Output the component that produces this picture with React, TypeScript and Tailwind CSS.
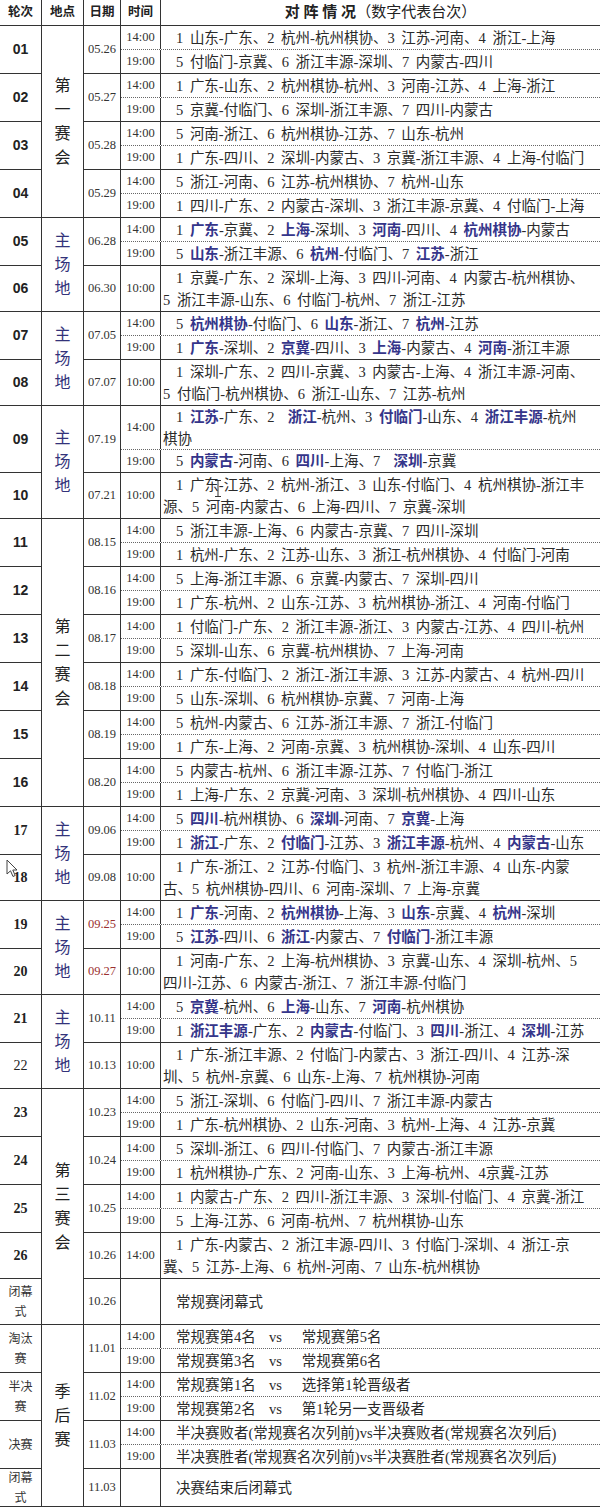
import React from 'react';

type Sub = { t: string; m: string[]; h?: string };
type Round = {
    no: string;
    kind: 'sans' | 'serifB' | 'serif' | 'label';
    date: string;
    red?: boolean;
    h: string;
    subs: Sub[];
};
type Group = { venue: string; blue?: boolean; rounds: Round[] };

const two = (no: string, date: string, a: string, b: string, kind: Round['kind'] = 'sans', red = false): Round => ({
    no,
    kind,
    date,
    red,
    h: 'h-[48px]',
    subs: [
        { t: '14:00', m: [a] },
        { t: '19:00', m: [b] },
    ],
});

const wrap = (no: string, date: string, t: string, l1: string, l2: string, kind: Round['kind'] = 'sans', red = false): Round => ({
    no,
    kind,
    date,
    red,
    h: 'h-[46px]',
    subs: [{ t, m: [l1, l2] }],
});

const groups: Group[] = [
    {
        venue: '第一赛会',
        rounds: [
            two('01', '05.26', '1 山东-广东、2 杭州-杭州棋协、3 江苏-河南、4 浙江-上海', '5 付临门-京冀、6 浙江丰源-深圳、7 内蒙古-四川'),
            two('02', '05.27', '1 广东-山东、2 杭州棋协-杭州、3 河南-江苏、4 上海-浙江', '5 京冀-付临门、6 深圳-浙江丰源、7 四川-内蒙古'),
            two('03', '05.28', '5 河南-浙江、6 杭州棋协-江苏、7 山东-杭州', '1 广东-四川、2 深圳-内蒙古、3 京冀-浙江丰源、4 上海-付临门'),
            two('04', '05.29', '5 浙江-河南、6 江苏-杭州棋协、7 杭州-山东', '1 四川-广东、2 内蒙古-深圳、3 浙江丰源-京冀、4 付临门-上海'),
        ],
    },
    {
        venue: '主场地',
        blue: true,
        rounds: [
            two('05', '06.28', '1 *广东*-京冀、2 *上海*-深圳、3 *河南*-四川、4 *杭州棋协*-内蒙古', '5 *山东*-浙江丰源、6 *杭州*-付临门、7 *江苏*-浙江'),
            wrap('06', '06.30', '10:00', '1 京冀-广东、2 深圳-上海、3 四川-河南、4 内蒙古-杭州棋协、', '5 浙江丰源-山东、6 付临门-杭州、7 浙江-江苏'),
        ],
    },
    {
        venue: '主场地',
        blue: true,
        rounds: [
            two('07', '07.05', '5 *杭州棋协*-付临门、6 *山东*-浙江、7 *杭州*-江苏', '1 *广东*-深圳、2 *京冀*-四川、3 *上海*-内蒙古、4 *河南*-浙江丰源'),
            wrap('08', '07.07', '10:00', '1 深圳-广东、2 四川-京冀、3 内蒙古-上海、4 浙江丰源-河南、', '5 付临门-杭州棋协、6 浙江-山东、7 江苏-杭州'),
        ],
    },
    {
        venue: '主场地',
        blue: true,
        rounds: [
            {
                no: '09',
                kind: 'sans',
                date: '07.19',
                h: 'h-[67px]',
                subs: [
                    { t: '14:00', h: 'h-[44px]', m: ['1 *江苏*-广东、2  *浙江*-杭州、3 *付临门*-山东、4 *浙江丰源*-杭州', '棋协'] },
                    { t: '19:00', m: ['5 *内蒙古*-河南、6 *四川*-上海、7  *深圳*-京冀'] },
                ],
            },
            wrap('10', '07.21', '10:00', '1 广东-江苏、2 杭州-浙江、3 山东-付临门、4 杭州棋协-浙江丰', '源、5 河南-内蒙古、6 上海-四川、7 京冀-深圳'),
        ],
    },
    {
        venue: '第二赛会',
        rounds: [
            two('11', '08.15', '5 浙江丰源-上海、6 内蒙古-京冀、7 四川-深圳', '1 杭州-广东、2 江苏-山东、3 浙江-杭州棋协、4 付临门-河南'),
            two('12', '08.16', '5 上海-浙江丰源、6 京冀-内蒙古、7 深圳-四川', '1 广东-杭州、2 山东-江苏、3 杭州棋协-浙江、4 河南-付临门'),
            two('13', '08.17', '1 付临门-广东、2 浙江丰源-浙江、3 内蒙古-江苏、4 四川-杭州', '5 深圳-山东、6 京冀-杭州棋协、7 上海-河南'),
            two('14', '08.18', '1 广东-付临门、2 浙江-浙江丰源、3 江苏-内蒙古、4 杭州-四川', '5 山东-深圳、6 杭州棋协-京冀、7 河南-上海'),
            two('15', '08.19', '5 杭州-内蒙古、6 江苏-浙江丰源、7 浙江-付临门', '1 广东-上海、2 河南-京冀、3 杭州棋协-深圳、4 山东-四川'),
            two('16', '08.20', '5 内蒙古-杭州、6 浙江丰源-江苏、7 付临门-浙江', '1 上海-广东、2 京冀-河南、3 深圳-杭州棋协、4 四川-山东'),
        ],
    },
    {
        venue: '主场地',
        blue: true,
        rounds: [
            two('17', '09.06', '5 *四川*-杭州棋协、6 *深圳*-河南、7 *京冀*-上海', '1 *浙江*-广东、2 *付临门*-江苏、3 *浙江丰源*-杭州、4 *内蒙古*-山东', 'serifB'),
            wrap('18', '09.08', '10:00', '1 广东-浙江、2 江苏-付临门、3 杭州-浙江丰源、4 山东-内蒙', '古、5 杭州棋协-四川、6 河南-深圳、7 上海-京冀', 'serifB'),
        ],
    },
    {
        venue: '主场地',
        blue: true,
        rounds: [
            two('19', '09.25', '1 *广东*-河南、2 *杭州棋协*-上海、3 *山东*-京冀、4 *杭州*-深圳', '5 *江苏*-四川、6 *浙江*-内蒙古、7 *付临门*-浙江丰源', 'serifB', true),
            wrap('20', '09.27', '10:00', '1 河南-广东、2 上海-杭州棋协、3 京冀-山东、4 深圳-杭州、5', '四川-江苏、6 内蒙古-浙江、7 浙江丰源-付临门', 'serifB', true),
        ],
    },
    {
        venue: '主场地',
        blue: true,
        rounds: [
            two('21', '10.11', '5 *京冀*-杭州、6 *上海*-山东、7 *河南*-杭州棋协', '1 *浙江丰源*-广东、2 *内蒙古*-付临门、3 *四川*-浙江、4 *深圳*-江苏', 'serifB'),
            wrap('22', '10.13', '10:00', '1 广东-浙江丰源、2 付临门-内蒙古、3 浙江-四川、4 江苏-深', '圳、5 杭州-京冀、6 山东-上海、7 杭州棋协-河南', 'serif'),
        ],
    },
    {
        venue: '第三赛会',
        rounds: [
            two('23', '10.23', '5 浙江-深圳、6 付临门-四川、7 浙江丰源-内蒙古', '1 广东-杭州棋协、2 山东-河南、3 杭州-上海、4 江苏-京冀', 'serifB'),
            two('24', '10.24', '5 深圳-浙江、6 四川-付临门、7 内蒙古-浙江丰源', '1 杭州棋协-广东、2 河南-山东、3 上海-杭州、4京冀-江苏', 'serifB'),
            two('25', '10.25', '1 内蒙古-广东、2 四川-浙江丰源、3 深圳-付临门、4 京冀-浙江', '5 上海-江苏、6 河南-杭州、7 杭州棋协-山东', 'serifB'),
            wrap('26', '10.26', '14:00', '1 广东-内蒙古、2 浙江丰源-四川、3 付临门-深圳、4 浙江-京', '冀、5 江苏-上海、6 杭州-河南、7 山东-杭州棋协', 'serifB'),
            { no: '闭幕\n式', kind: 'label', date: '10.26', h: 'h-[46px]', subs: [{ t: '', m: ['常规赛闭幕式'] }] },
        ],
    },
    {
        venue: '季后赛',
        rounds: [
            two('淘汰\n赛', '11.01', '常规赛第4名  vs   常规赛第5名', '常规赛第3名  vs   常规赛第6名', 'label'),
            two('半决\n赛', '11.02', '常规赛第1名  vs   选择第1轮晋级者', '常规赛第2名  vs   第1轮另一支晋级者', 'label'),
            two('决赛', '11.03', '半决赛败者(常规赛名次列前)vs半决赛败者(常规赛名次列后)', '半决赛胜者(常规赛名次列前)vs半决赛胜者(常规赛名次列后)', 'label'),
            { no: '闭幕\n式', kind: 'label', date: '11.03', h: 'h-[38px]', subs: [{ t: '', m: ['决赛结束后闭幕式'] }] },
        ],
    },
];

const noClass: Record<Round['kind'], string> = {
    sans: "font-['Liberation_Sans'] font-bold text-[14px]",
    serifB: 'font-bold text-[14px]',
    serif: 'text-[14px]',
    label: 'whitespace-pre-line text-center text-[12px] leading-[20px] text-[#333]',
};

const Rich = ({ s }: { s: string }) => (
    <>
        {s.split('*').map((p, i) =>
            i % 2 ? (
                <b key={i} className="font-bold text-[#35358a]">
                    {p}
                </b>
            ) : (
                <span key={i}>{p}</span>
            ),
        )}
    </>
);

const RoundRow = ({ r }: { r: Round }) => (
    <div className={`${r.h} flex border-b border-[#333]`}>
        {/* date */}
        <div
            className={`flex w-[37px] shrink-0 items-center justify-center border-r border-[#333] text-[12.5px] ${
                r.red ? 'text-[#9b3030]' : 'text-[#333]'
            }`}
        >
            {r.date}
        </div>
        <div className="flex flex-1 flex-col">
            {r.subs.map((s, i) => (
                <div
                    key={i}
                    className={`flex ${s.h ?? 'flex-1'} ${i < r.subs.length - 1 ? 'border-b border-dotted border-[#666]' : ''}`}
                >
                    <div className="flex w-[40px] shrink-0 items-center justify-center border-r border-[#333] text-[12.5px] text-[#333]">
                        {s.t}
                    </div>
                    <div className="flex flex-1 flex-col justify-center overflow-hidden pl-[2px] indent-[13px] text-[14.5px] leading-[22px] whitespace-pre text-[#2a2a2a] [word-spacing:3px]">
                        <p>
                            {s.m.map((l, j) => (
                                <React.Fragment key={j}>
                                    {j > 0 && <br />}
                                    <Rich s={l} />
                                </React.Fragment>
                            ))}
                        </p>
                    </div>
                </div>
            ))}
        </div>
    </div>
);

const App: React.FC = () => {
    return (
        <div className="relative w-[600px] bg-white font-['Liberation_Serif','Noto_Sans_CJK_SC',serif] text-[#222]">
            {/* header */}
            <div className="flex h-[26px] border-b border-[#333] text-[12.5px] font-bold">
                <div className="flex w-[42px] items-center justify-center border-r border-[#333]">轮次</div>
                <div className="flex w-[42px] items-center justify-center border-r border-[#333]">地点</div>
                <div className="flex w-[37px] items-center justify-center border-r border-[#333]">日期</div>
                <div className="flex w-[40px] items-center justify-center border-r border-[#333]">时间</div>
                <div className="flex flex-1 items-center justify-center text-[15px] whitespace-pre">
                    <span className="font-bold">对 阵 情 况</span>
                    <span className="font-normal">（数字代表台次）</span>
                </div>
            </div>

            {groups.map((g, gi) => (
                <div key={gi} className="flex">
                    <div className="flex w-[42px] shrink-0 flex-col">
                        {g.rounds.map((r, ri) => (
                            <div
                                key={ri}
                                className={`${r.h} flex items-center justify-center border-r border-b border-[#333] ${noClass[r.kind]}`}
                            >
                                {r.no}
                            </div>
                        ))}
                    </div>
                    <div
                        className={`flex w-[42px] shrink-0 flex-col items-center justify-center border-r border-b border-[#333] text-[16px] leading-[24px] ${
                            g.blue ? 'text-[#33337a]' : 'text-[#222]'
                        }`}
                    >
                        {g.venue.split('').map((c, ci) => (
                            <span key={ci}>{c}</span>
                        ))}
                    </div>
                    <div className="flex flex-1 flex-col">
                        {g.rounds.map((r, ri) => (
                            <RoundRow key={ri} r={r} />
                        ))}
                    </div>
                </div>
            ))}

            {/* mouse pointer */}
            <svg className="absolute top-[859px] left-[6px]" width="12" height="19" viewBox="0 0 12 19">
                <path d="M1 1 L1 15 L4.5 11.8 L7 17.5 L9.2 16.5 L6.8 11 L11 11 Z" fill="#fff" stroke="#444" strokeWidth="1" />
            </svg>
            {/* text caret */}
            <svg className="absolute top-[480px] left-[214px]" width="8" height="17" viewBox="0 0 8 17">
                <path d="M1 0.5 H7 M4 0.5 V16.5 M1 16.5 H7" stroke="#333" strokeWidth="1" fill="none" />
            </svg>
        </div>
    );
};

export default App;
